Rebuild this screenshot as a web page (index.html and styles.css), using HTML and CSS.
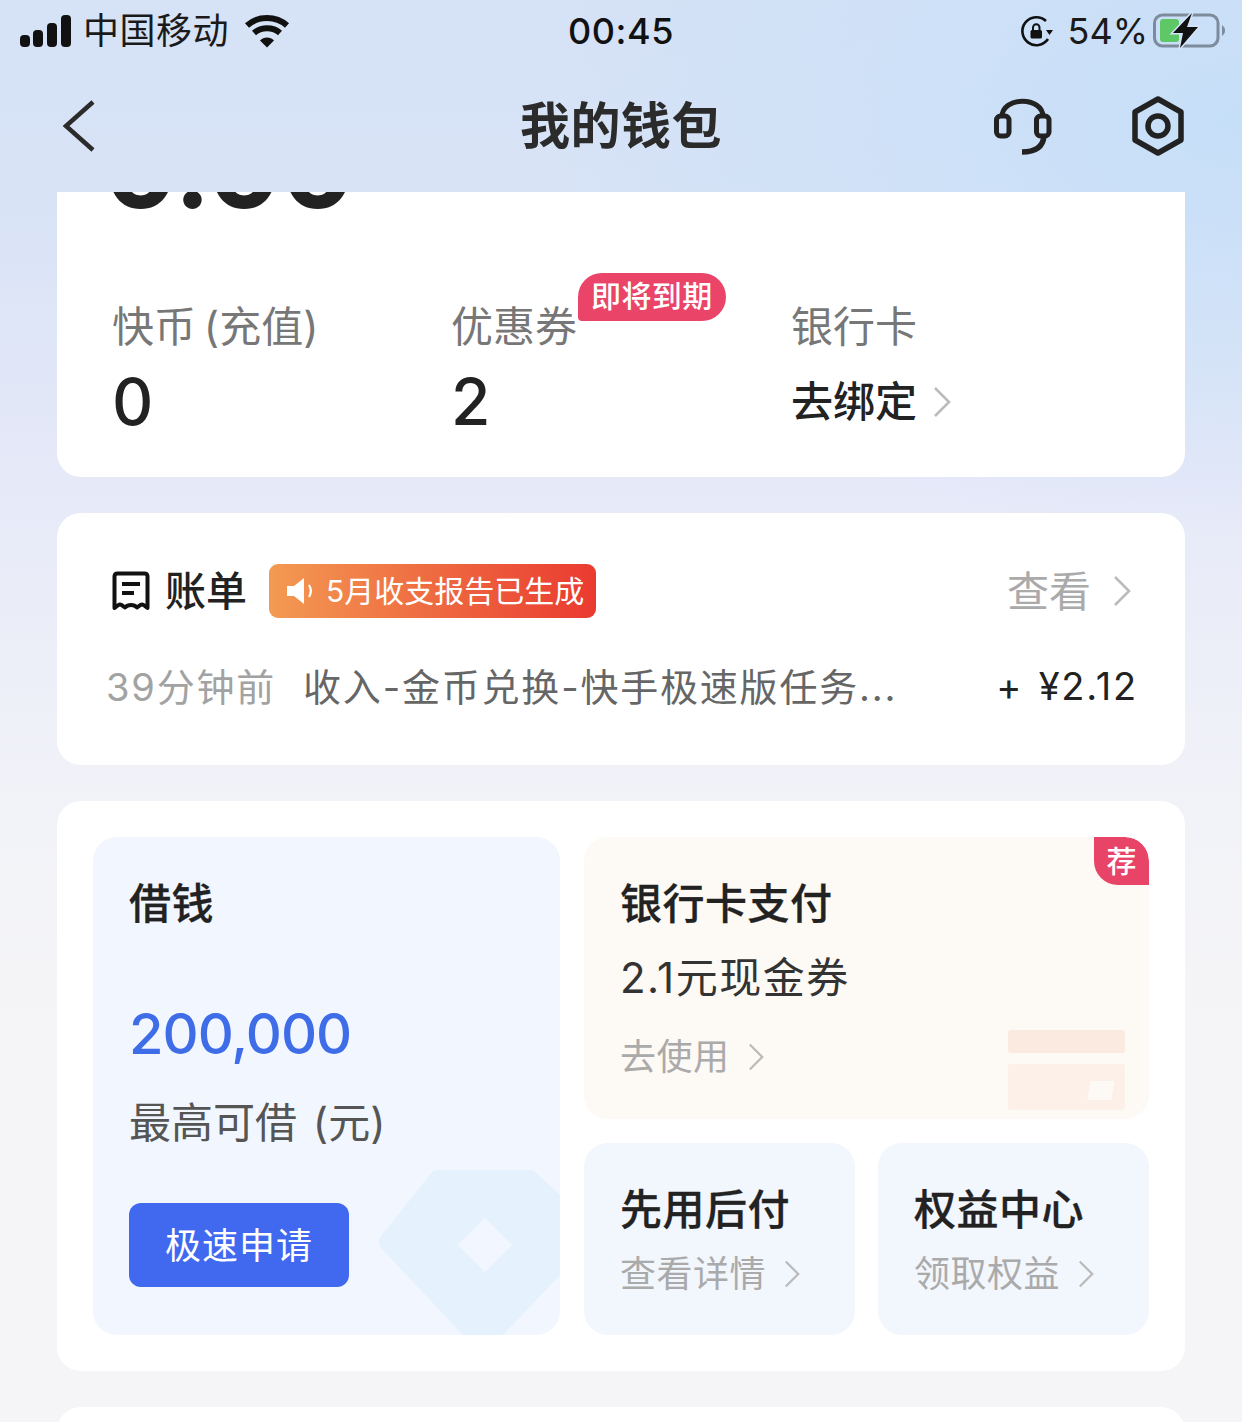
FILE: index.html
```html
<!DOCTYPE html>
<html lang="zh-CN">
<head>
    <meta charset="utf-8">
    <title>我的钱包</title>
    <link rel="stylesheet" href="styles.css">
</head>
<body>
    <div class="page">
        <div class="status-bar">
            <div class="status-left">
                <svg class="signal" width="52" height="32" viewBox="0 0 52 32">
                    <rect x="0" y="20" width="10" height="12" rx="4" fill="#111"/>
                    <rect x="13" y="15" width="10" height="17" rx="4" fill="#111"/>
                    <rect x="27" y="8" width="10" height="24" rx="4" fill="#111"/>
                    <rect x="41" y="0" width="10" height="32" rx="4" fill="#111"/>
                </svg>
                <span class="carrier">中国移动</span>
                <svg class="wifi" width="46" height="34" viewBox="0 0 46 34">
                    <path d="M3 11.500C14 1.500 32 1.500 43 11.500" fill="none" stroke="#111" stroke-width="6"/>
                    <path d="M10 19C17 12.800 29 12.800 36 19" fill="none" stroke="#111" stroke-width="6"/>
                    <path d="M16 26.500C19.500 22.500 26.500 22.500 30 26.500L23 33.500Z" fill="#111"/>
                </svg>
            </div>
            <div class="status-time">00:45</div>
            <div class="status-right">
                <svg class="rotate-lock" width="34" height="34" viewBox="0 0 34 34">
                    <path d="M26 7A14 14 0 1 0 28 25" fill="none" stroke="#111" stroke-width="2.6"/>
                    <path d="M26 16H33L29.500 21Z" fill="#111"/>
                    <rect x="10.500" y="16" width="11.500" height="8.500" rx="1.500" fill="#111"/>
                    <path d="M13 16V13.500A3.200 3.200 0 0 1 19.500 13.500V16" fill="none" stroke="#111" stroke-width="2"/>
                </svg>
                <span class="battery-text">54%</span>
                <svg class="battery" width="74" height="36" viewBox="0 0 74 36">
                    <rect x="1.500" y="2" width="63.500" height="31" rx="8" fill="none" stroke="#7d8b9c" stroke-width="3"/>
                    <rect x="7" y="6" width="19" height="23" rx="3" fill="#5fc866"/>
                    <path d="M69 12C71.500 14 72 15.500 72 17.500C72 19.500 71.500 21 69 23Z" fill="#7d8b9c"/>
                    <path d="M39 0L20 20H30L27 35L45 14H34Z" fill="#111" stroke="#d3e4f7" stroke-width="3" paint-order="stroke"/>
                </svg>
            </div>
        </div>

        <div class="nav-bar">
            <svg class="nav-back" width="34" height="54" viewBox="0 0 34 54">
                <path d="M31 3L4 27L31 51" fill="none" stroke="#2b2b2b" stroke-width="4.500"/>
            </svg>
            <h1 class="nav-title">我的钱包</h1>
            <div class="nav-icons">
                <svg width="60" height="58" viewBox="0 0 60 58">
                    <path d="M9 20C9 -1 50 -1 50 20" fill="none" stroke="#222" stroke-width="5"/>
                    <rect x="3.500" y="19" width="12.500" height="20" rx="4" fill="none" stroke="#222" stroke-width="5"/>
                    <rect x="43.500" y="19" width="12.500" height="20" rx="4" fill="none" stroke="#222" stroke-width="5"/>
                    <path d="M51 39C50 50 42 55 29 55" fill="none" stroke="#222" stroke-width="5.500"/>
                </svg>
                <svg width="54" height="60" viewBox="0 0 54 60">
                    <path d="M27 3L50 16V44L27 57L4 44V16Z" fill="none" stroke="#222" stroke-width="5.500" stroke-linejoin="round"/>
                    <circle cx="27" cy="30" r="10" fill="none" stroke="#222" stroke-width="5.500"/>
                </svg>
            </div>
        </div>

        <div class="card card-balance">
            <div class="balance-clip"><span class="balance-num">0.00</span></div>
            <div class="stats">
                <div class="stat">
                    <div class="stat-label">快币 (充值)</div>
                    <div class="stat-value">0</div>
                </div>
                <div class="stat">
                    <div class="stat-label">优惠券</div>
                    <div class="stat-value">2</div>
                    <span class="expire-tag">即将到期</span>
                </div>
                <div class="stat">
                    <div class="stat-label">银行卡</div>
                    <div class="stat-link">去绑定
                        <svg class="chevron" width="18" height="32" viewBox="0 0 18 32"><path d="M2 2L16 16L2 30" fill="none" stroke="#bbb" stroke-width="2.600"/></svg>
                    </div>
                </div>
            </div>
        </div>

        <div class="card card-bill">
            <div class="bill-head">
                <svg class="bill-icon" width="38" height="40" viewBox="0 0 38 40">
                    <path d="M2.500 37V5A3 3 0 0 1 5.500 2.500H32.500A3 3 0 0 1 35.500 5V37C30 32.500 30 32.500 25 36.500C22 33 16 33 13 36.500C8 32.500 8 32.500 2.500 37Z" fill="none" stroke="#111" stroke-width="4" stroke-linejoin="round"/>
                    <path d="M10 13H28M10 22H22" stroke="#111" stroke-width="4"/>
                </svg>
                <span class="bill-title">账单</span>
                <span class="bill-tag">
                    <svg width="28" height="28" viewBox="0 0 28 28">
                        <path d="M1 9H8L18 1V27L8 19H1Z" fill="#fff"/>
                        <path d="M23 8C25.500 12 25.500 16 23 20" fill="none" stroke="#fff" stroke-width="2.200"/>
                    </svg>
                    5月收支报告已生成
                </span>
                <span class="bill-more">查看
                    <svg class="chevron" width="18" height="32" viewBox="0 0 18 32"><path d="M2 2L16 16L2 30" fill="none" stroke="#bbb" stroke-width="2.600"/></svg>
                </span>
            </div>
            <div class="bill-row">
                <span class="bill-time">39分钟前</span>
                <span class="bill-desc">收入-金币兑换-快手极速版任务...</span>
                <span class="bill-amount">+ ¥2.12</span>
            </div>
        </div>

        <div class="card card-services">
            <div class="tile tile-loan">
                <div class="tile-title">借钱</div>
                <div class="loan-num">200,000</div>
                <div class="loan-label">最高可借 (元)</div>
                <div class="loan-btn">极速申请</div>
                <svg class="loan-deco" width="182" height="166" viewBox="0 0 182 166">
                    <path d="M54 3Q56 1 60 1H155L182 26V106L125 166H85L4 80Q-2 73 4 66Z" fill="#e5f1fc"/>
                    <path d="M107 49L134 76L107 103L80 76Z" fill="#f1f6ff"/>
                </svg>
            </div>
            <div class="tile-side">
                <div class="tile tile-pay">
                    <div class="tile-title">银行卡支付</div>
                    <div class="pay-offer">2.1元现金券</div>
                    <div class="tile-link">去使用
                        <svg class="chevron" width="16" height="30" viewBox="0 0 18 32"><path d="M2 2L16 16L2 30" fill="none" stroke="#bbb" stroke-width="2.600"/></svg>
                    </div>
                    <span class="rec-tag">荐</span>
                    <div class="pay-deco">
                        <div class="deco-strip"></div>
                        <div class="deco-body"><span class="deco-chip"></span></div>
                    </div>
                </div>
                <div class="tile tile-small">
                    <div class="tile-title">先用后付</div>
                    <div class="tile-link">查看详情
                        <svg class="chevron" width="16" height="30" viewBox="0 0 18 32"><path d="M2 2L16 16L2 30" fill="none" stroke="#bbb" stroke-width="2.600"/></svg>
                    </div>
                </div>
                <div class="tile tile-small">
                    <div class="tile-title">权益中心</div>
                    <div class="tile-link">领取权益
                        <svg class="chevron" width="16" height="30" viewBox="0 0 18 32"><path d="M2 2L16 16L2 30" fill="none" stroke="#bbb" stroke-width="2.600"/></svg>
                    </div>
                </div>
            </div>
        </div>

        <div class="card card-next"></div>
    </div>
</body>
</html>
```

FILE: styles.css
```css
* {
    box-sizing: border-box;
}

body {
    margin: 0;
    font-family: "Inter", "Noto Sans CJK SC", sans-serif;
    color: #222;
}

.page {
    width: 1242px;
    height: 1422px;
    overflow: hidden;
    background:
        radial-gradient(ellipse 700px 420px at 1242px 120px, #c6dff8 0%, rgba(198,223,248,0) 100%),
        linear-gradient(180deg, #d6e2f6 0%, #d8e3f6 14%, #e6e9f8 34%, #f1f2f8 55%, #f5f5f7 72%, #f5f5f7 100%);
}

/* status bar */
.status-bar {
    display: grid;
    grid-template-columns: 1fr auto 1fr;
    align-items: center;
    height: 62px;
    padding: 0 20px;
}

.status-left {
    display: flex;
    align-items: center;
}

.carrier {
    margin-left: 11px;
    font-size: 36px;
    line-height: 40px;
    letter-spacing: 0.5px;
    color: #1a1a1a;
}

.wifi {
    margin-left: 15px;
}

.status-time {
    font-size: 36px;
    font-weight: 500;
    letter-spacing: 0.5px;
    color: #111;
}

.status-right {
    display: flex;
    align-items: center;
    justify-content: flex-end;
    margin-right: -5px;
}

.battery-text {
    margin: 0 5px 0 14px;
    font-size: 36px;
    color: #1a1a1a;
}

/* nav */
.nav-bar {
    position: relative;
    display: flex;
    align-items: center;
    justify-content: space-between;
    height: 130px;
    padding: 0 57px 2px 62px;
}

.nav-title {
    position: absolute;
    left: 0;
    right: 0;
    top: 32px;
    margin: 0;
    text-align: center;
    font-size: 50px;
    line-height: 64px;
    letter-spacing: 0.5px;
    font-weight: 700;
    color: #2b2b2b;
}

.nav-icons {
    display: flex;
    align-items: center;
    gap: 78px;
}

/* cards */
.card {
    margin: 0 57px 36px;
    background: #fff;
    border-radius: 24px;
}

.card-balance {
    position: relative;
    height: 285px;
    padding: 0 0 0 55px;
    border-radius: 0 0 24px 24px;
}

.balance-clip {
    height: 24px;
    overflow: hidden;
}

.balance-num {
    display: block;
    margin-top: -84px;
    margin-left: -8px;
    font-size: 109px;
    line-height: 120px;
    font-weight: 700;
    color: #222;
}

.stats {
    display: grid;
    grid-template-columns: 339px 340px 1fr;
    margin-top: 84px;
}

.stat {
    position: relative;
}

.stat-label {
    font-size: 42px;
    line-height: 54px;
    word-spacing: -4px;
    color: #777;
}

.stat-value {
    margin-top: 10px;
    font-size: 64px;
    line-height: 76px;
    font-weight: 500;
    color: #222;
}

.stat-link {
    display: flex;
    align-items: center;
    gap: 16px;
    height: 76px;
    margin-top: 6px;
    font-size: 42px;
    font-weight: 500;
    color: #222;
}

.stat-link .chevron {
    margin-top: 7px;
}

.expire-tag {
    position: absolute;
    left: 127px;
    top: -27px;
    height: 48px;
    padding: 0 13px;
    border-radius: 24px 24px 24px 4px;
    background: #ea4468;
    color: #fff;
    font-size: 30px;
    line-height: 46px;
    letter-spacing: 0.4px;
    font-weight: 500;
    white-space: nowrap;
}

.card-bill {
    height: 252px;
    padding: 51px 50px 0 50px;
}

.bill-head {
    display: flex;
    align-items: center;
    height: 54px;
    padding-left: 5px;
}

.bill-title {
    margin-left: 15px;
    padding-bottom: 6px;
    font-size: 41px;
    font-weight: 500;
    color: #222;
}

.bill-tag {
    display: flex;
    align-items: center;
    gap: 12px;
    height: 54px;
    margin-left: 22px;
    padding: 0 12px 4px 17px;
    border-radius: 9px;
    background: linear-gradient(90deg, #f39a52, #ea3a30);
    color: #fff;
    font-size: 30px;
}

.bill-tag svg {
    margin-top: 4px;
}

.bill-more {
    display: flex;
    align-items: center;
    gap: 22px;
    margin-left: auto;
    margin-right: 4px;
    padding-bottom: 6px;
    font-size: 42px;
    color: #aaa;
}

.bill-more .chevron {
    margin-top: 6px;
}

.bill-row {
    display: flex;
    align-items: center;
    height: 60px;
    margin-top: 36px;
    margin-left: -1px;
    font-size: 38px;
    letter-spacing: 1.8px;
    white-space: nowrap;
}

.bill-time {
    color: #a2a2a2;
}

.bill-desc {
    margin-left: 27px;
    color: #666;
}

.bill-amount {
    margin-left: auto;
    margin-right: -3px;
    padding-top: 4px;
    word-spacing: 3px;
    color: #222;
}

.card-services {
    display: grid;
    grid-template-columns: 467px 565px;
    gap: 24px;
    height: 570px;
    padding: 36px;
}

.tile {
    position: relative;
    overflow: hidden;
    border-radius: 24px;
    background: #f2f6fd;
    padding: 38px 36px 0 36px;
}

.tile-title {
    font-size: 42px;
    line-height: 58px;
    letter-spacing: 0.5px;
    font-weight: 500;
    -webkit-text-stroke: 0.3px #222;
    color: #222;
}

.tile-link {
    display: flex;
    align-items: center;
    gap: 18px;
    font-size: 36px;
    line-height: 50px;
    letter-spacing: 0.5px;
    color: #aaa;
}

.tile-loan {
    background: #f1f6ff;
}

.loan-num {
    margin-top: 63px;
    font-size: 56px;
    line-height: 76px;
    letter-spacing: -1px;
    font-weight: 500;
    color: #3f6de8;
}

.loan-label {
    margin-top: 23px;
    font-size: 42px;
    line-height: 56px;
    word-spacing: 4px;
    color: #555;
}

.loan-btn {
    display: inline-block;
    width: 220px;
    height: 84px;
    margin-top: 52px;
    border-radius: 12px;
    background: #4069f0;
    color: #fff;
    text-align: center;
    font-size: 36px;
    line-height: 86px;
    letter-spacing: 1px;
}

.loan-deco {
    position: absolute;
    right: 0;
    bottom: 0;
}

.tile-side {
    display: grid;
    grid-template-columns: 271px 271px;
    grid-template-rows: 282px 192px;
    column-gap: 23px;
    row-gap: 24px;
}

.tile-pay {
    grid-column: 1 / 3;
    background: #fdf9f5;
}

.pay-offer {
    margin-top: 17px;
    font-size: 42px;
    line-height: 56px;
    letter-spacing: 1.5px;
    color: #333;
}

.tile-pay .tile-link {
    margin-top: 26px;
}

.rec-tag {
    position: absolute;
    right: 0;
    top: 0;
    width: 55px;
    height: 48px;
    border-radius: 0 24px 0 24px;
    background: #e84468;
    color: #fff;
    text-align: center;
    font-size: 30px;
    line-height: 48px;
    font-weight: 500;
}

.pay-deco {
    position: absolute;
    right: 24px;
    bottom: 9px;
    width: 117px;
}

.deco-strip {
    height: 23px;
    border-radius: 3px;
    background: #fbeadf;
}

.deco-body {
    display: flex;
    align-items: flex-end;
    justify-content: flex-end;
    height: 46px;
    margin-top: 11px;
    padding: 0 12px 10px 0;
    border-radius: 3px;
    background: #fcf0e8;
}

.deco-chip {
    width: 24px;
    height: 19px;
    background: #fdf9f5;
    transform: skewX(-10deg);
}

.tile-small {
    padding-top: 38px;
}

.tile-small .tile-link {
    margin-top: 10px;
}

.card-next {
    height: 120px;
}
```
